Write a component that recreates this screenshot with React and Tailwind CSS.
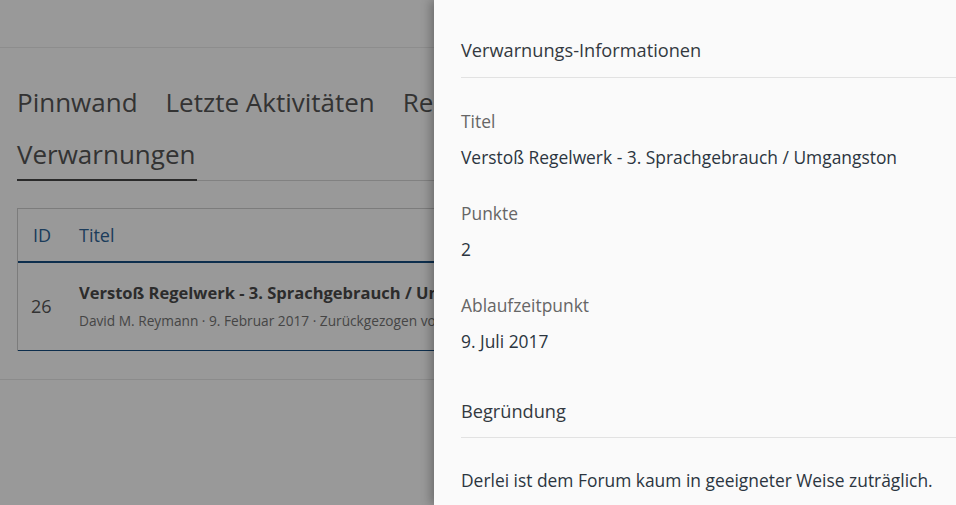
const tabs = ["Pinnwand", "Letzte Aktivitäten", "Reputation", "Verwarnungen"];

const details = [
  { label: "Titel", value: "Verstoß Regelwerk - 3. Sprachgebrauch / Umgangston" },
  { label: "Punkte", value: "2" },
  { label: "Ablaufzeitpunkt", value: "9. Juli 2017" },
];

function ProfilePage() {
  return (
    <div className="h-full w-[440px] overflow-hidden bg-white">
      <div className="w-[1100px]">
        <div className="h-[48px] border-b border-[#ececec]" />
        <div className="px-[17px] pt-[28px]">
          <ul className="flex flex-wrap gap-x-[28px] border-b border-[#d8d8d8] w-[700px] text-[26px] leading-[53px] text-[#555]">
            {tabs.map((t) => (
              <li
                key={t}
                className={t === "Verwarnungen" ? "border-b-2 border-[#474747] -mb-px pr-[2px] leading-[50px]" : ""}
              >
                {t}
              </li>
            ))}
          </ul>

          <div className="mt-[27px] border border-[#cfcfcf] border-b-0 w-[900px]">
            <div className="flex h-[54px] items-center border-b-2 border-[#164e80] text-[18px] text-[#2f6598]">
              <div className="w-[61px] pl-[15px]">ID</div>
              <div>Titel</div>
            </div>
            <div className="flex h-[88px] items-center border-b border-[#164e80]">
              <div className="w-[61px] pl-[13px] text-[18px] text-[#555]">26</div>
              <div className="pb-[1px]">
                <div className="text-[16.5px] font-bold leading-[26px] text-[#4a4a4a]">
                  Verstoß Regelwerk - 3. Sprachgebrauch / Umgangston
                </div>
                <div className="mt-[4px] text-[13.7px] leading-[22px] text-[#747474]">
                  David M. Reymann · 9. Februar 2017 · Zurückgezogen von David M. Reymann
                </div>
              </div>
            </div>
          </div>
        </div>
        <div className="mt-[28px] h-[200px] border-t border-[#e8e8e8]" />
      </div>
    </div>
  );
}

function WarningPanel() {
  return (
    <aside className="absolute right-0 top-0 h-full w-[522px] bg-[#fafafa] pl-[27px] shadow-[-3px_0_10px_rgba(0,0,0,0.3)]">
      <h2 className="mt-[36px] border-b border-[#e2e2e2] pb-[13px] text-[18.2px] leading-[28px] text-[#33393f]">
        Verwarnungs-Informationen
      </h2>
      <dl className="mt-[31px]">
        {details.map((d) => (
          <div key={d.label} className="mb-[32px]">
            <dt className="text-[17.4px] leading-[24px] text-[#666]">{d.label}</dt>
            <dd className="mt-[12px] text-[17.4px] leading-[24px] text-[#2b3540]">{d.value}</dd>
          </div>
        ))}
      </dl>
      <h2 className="mt-[44px] border-b border-[#e2e2e2] pb-[12px] text-[18.2px] leading-[28px] text-[#33393f]">
        Begründung
      </h2>
      <p className="mt-[30px] text-[17.4px] leading-[24px] text-[#2b3540]">
        Derlei ist dem Forum kaum in geeigneter Weise zuträglich.
      </p>
    </aside>
  );
}

export default function App() {
  return (
    <div
      className="relative h-[505px] w-[956px] overflow-hidden bg-white"
      style={{ fontFamily: '"Open Sans", "Noto Sans", sans-serif' }}
    >
      <ProfilePage />
      <div className="absolute inset-0 bg-black/40" />
      <WarningPanel />
    </div>
  );
}
